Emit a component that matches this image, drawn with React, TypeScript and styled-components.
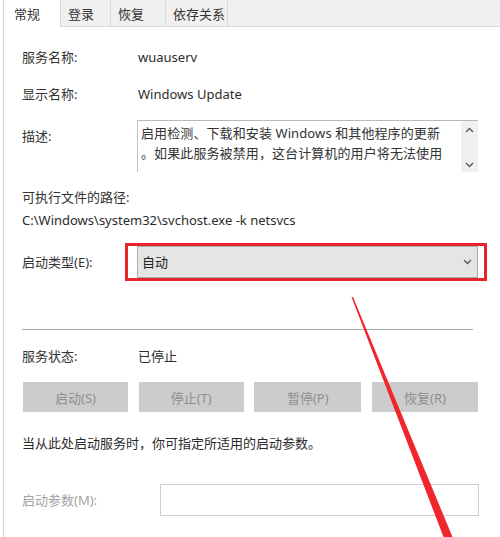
import React from "react";
import styled, { createGlobalStyle } from "styled-components";

const GlobalStyle = createGlobalStyle`
	html, body {
		margin: 0;
		padding: 0;
		background: #ffffff;
	}
	body {
		font-family: "Noto Sans", "Noto Sans CJK SC", sans-serif;
		font-size: 13px;
		color: #2b2b2b;
	}
`;

const Window = styled.div`
	position: relative;
	width: 500px;
	height: 537px;
	overflow: hidden;
	background: #ffffff;
`;

const Frame = styled.div`
	margin-left: 3px;
	height: 100%;
	border-left: 1px solid #d4d4d4;
	display: flex;
	flex-direction: column;
`;

const TabStrip = styled.div`
	display: flex;
	height: 27px;
	background: #f0f0f0;
	border-bottom: 1px solid #dadada;
	box-sizing: border-box;
`;

const Tab = styled.div<{ $active?: boolean; $w: number }>`
	width: ${(p) => p.$w}px;
	box-sizing: border-box;
	display: flex;
	align-items: center;
	padding-left: ${(p) => (p.$active ? 10 : 7)}px;
	background: ${(p) => (p.$active ? "#ffffff" : "#f0f0f0")};
	border-right: 1px solid #dadada;
	margin-bottom: ${(p) => (p.$active ? "-1px" : "0")};
	color: #333;
	font-size: 13px;
`;

const Panel = styled.div`
	flex: 1;
	padding: 20px 22px 0 18px;
	display: flex;
	flex-direction: column;
`;

const Row = styled.div<{ $mt: number; $top?: boolean; $h?: number }>`
	display: flex;
	align-items: ${(p) => (p.$top ? "flex-start" : "center")};
	margin-top: ${(p) => p.$mt}px;
	min-height: ${(p) => p.$h ?? 20}px;
	line-height: 20px;
`;

const Label = styled.div<{ $w?: number; $muted?: boolean; $pt?: number }>`
	width: ${(p) => p.$w ?? 116}px;
	flex: none;
	padding-top: ${(p) => p.$pt ?? 0}px;
	color: ${(p) => (p.$muted ? "#a3a3a3" : "#333")};
`;

const Value = styled.div`
	color: #2b2b2b;
`;

const DescBox = styled.div`
	flex: 1;
	height: 52px;
	box-sizing: border-box;
	border-top: 1px solid #b8b8b8;
	border-left: 1px solid #c4c4c4;
	display: flex;
	margin-left: -1px;
`;

const DescText = styled.div`
	flex: 1;
	padding: 3px 0 0 3px;
	line-height: 19.5px;
	font-size: 13px;
	color: #333;
	letter-spacing: 0.1px;
`;

const ScrollBar = styled.div`
	width: 17px;
	background: #f0f0f0;
	display: flex;
	flex-direction: column;
	justify-content: space-between;
	align-items: center;
	padding: 6px 0 4px;
	box-sizing: border-box;
`;

const SelectWrap = styled.div`
	position: relative;
	flex: 1;
	margin-left: -1px;
`;

const Select = styled.div`
	height: 32px;
	box-sizing: border-box;
	background: #e5e5e5;
	border: 1px solid #adadad;
	display: flex;
	align-items: center;
	justify-content: space-between;
	padding: 0 5px 0 4px;
	color: #222;
`;

const Highlight = styled.div`
	position: absolute;
	left: -12px;
	right: -9px;
	top: -3px;
	bottom: -3px;
	border: 3px solid #e7232b;
	pointer-events: none;
`;

const Separator = styled.div`
	margin-top: 51px;
	height: 1px;
	background: #a9a9a9;
	margin-right: 5px;
`;

const ButtonRow = styled.div`
	margin-top: 16px;
	display: grid;
	grid-template-columns: 105px 105px 107px 106px;
	padding-left: 1px;
	justify-content: space-between;
`;

const Button = styled.div`
	height: 30px;
	background: #cccccc;
	color: #8f8f8f;
	display: flex;
	align-items: center;
	justify-content: center;
	font-size: 13px;
`;

const ParamInput = styled.div`
	flex: 1;
	height: 32px;
	box-sizing: border-box;
	border: 1px solid #cfcfcf;
	background: #fff;
	margin-right: -1px;
`;

const Overlay = styled.svg`
	position: absolute;
	left: 0;
	top: 0;
	pointer-events: none;
`;

const Chevron = ({ up }: { up?: boolean }) => (
	<svg width="9" height="6" viewBox="0 0 9 6">
		<path
			d={up ? "M1 5 L4.5 1.5 L8 5" : "M1 1 L4.5 4.5 L8 1"}
			fill="none"
			stroke="#555"
			strokeWidth="1.3"
		/>
	</svg>
);

export default function App() {
	return (
		<Window>
			<GlobalStyle />
			<Frame>
				<TabStrip>
					<Tab $active $w={57}>常规</Tab>
					<Tab $w={50}>登录</Tab>
					<Tab $w={55}>恢复</Tab>
					<Tab $w={62}>依存关系</Tab>
				</TabStrip>
				<Panel>
					<Row $mt={0}>
						<Label>服务名称:</Label>
						<Value>wuauserv</Value>
					</Row>
					<Row $mt={17}>
						<Label>显示名称:</Label>
						<Value>Windows Update</Value>
					</Row>
					<Row $mt={16} $top>
						<Label $pt={6}>描述:</Label>
						<DescBox>
							<DescText>
								启用检测、下载和安装 Windows 和其他程序的更新
								<br />
								。如果此服务被禁用，这台计算机的用户将无法使用
							</DescText>
							<ScrollBar>
								<Chevron up />
								<Chevron />
							</ScrollBar>
						</DescBox>
					</Row>
					<Row $mt={15}>
						<Label $w={300}>可执行文件的路径:</Label>
					</Row>
					<Row $mt={3}>
						<Value>C:\Windows\system32\svchost.exe -k netsvcs</Value>
					</Row>
					<Row $mt={16} $h={32}>
						<Label>启动类型(E):</Label>
						<SelectWrap>
							<Select>
								<span>自动</span>
								<Chevron />
							</Select>
							<Highlight />
						</SelectWrap>
					</Row>
					<Separator />
					<Row $mt={16}>
						<Label>服务状态:</Label>
						<Value>已停止</Value>
					</Row>
					<ButtonRow>
						<Button>启动(S)</Button>
						<Button>停止(T)</Button>
						<Button>暂停(P)</Button>
						<Button>恢复(R)</Button>
					</ButtonRow>
					<Row $mt={21}>
						<Value>当从此处启动服务时，你可指定所适用的启动参数。</Value>
					</Row>
					<Row $mt={31} $h={32}>
						<Label $w={138} $muted>
							启动参数(M):
						</Label>
						<ParamInput />
					</Row>
				</Panel>
			</Frame>
			<Overlay width="500" height="537" viewBox="0 0 500 537">
				<polygon points="351.5,297 353,297 452.5,537 443.5,537" fill="#f0262c" />
			</Overlay>
		</Window>
	);
}
